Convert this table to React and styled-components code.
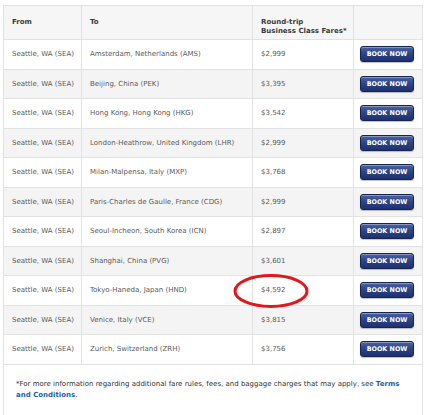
import React from "react";
import styled, { createGlobalStyle } from "styled-components";

const fares = [
  { to: "Amsterdam, Netherlands (AMS)", price: "$2,999" },
  { to: "Beijing, China (PEK)", price: "$3,395" },
  { to: "Hong Kong, Hong Kong (HKG)", price: "$3,542" },
  { to: "London-Heathrow, United Kingdom (LHR)", price: "$2,999" },
  { to: "Milan-Malpensa, Italy (MXP)", price: "$3,768" },
  { to: "Paris-Charles de Gaulle, France (CDG)", price: "$2,999" },
  { to: "Seoul-Incheon, South Korea (ICN)", price: "$2,897" },
  { to: "Shanghai, China (PVG)", price: "$3,601" },
  { to: "Tokyo-Haneda, Japan (HND)", price: "$4,592" },
  { to: "Venice, Italy (VCE)", price: "$3,815" },
  { to: "Zurich, Switzerland (ZRH)", price: "$3,756" },
];

const GlobalStyle = createGlobalStyle`
  body {
    margin: 0;
    background: #fff;
    font-family: "DejaVu Sans", Verdana, sans-serif;
  }
`;

const Wrapper = styled.div`
  position: relative;
  padding: 5px 8px 0 3px;
`;

const Table = styled.table`
  width: 419px;
  border-collapse: collapse;
  table-layout: fixed;
  border: 1px solid #e2e2e2;
  font-size: 7px;
  color: #5a5a5a;
`;

const Head = styled.th`
  background: #f6f6f6;
  border: 1px solid #e2e2e2;
  text-align: left;
  vertical-align: top;
  font-weight: bold;
  color: #3a3a3a;
  line-height: 9px;
  white-space: nowrap;
  padding: 12px 7px 0 8px;
  height: 21px;
`;

const Row = styled.tr`
  background: ${(p) => (p.$odd ? "#f4f4f4" : "#fff")};
`;

const Cell = styled.td`
  border: 1px solid #e2e2e2;
  padding: 0 8px;
  height: 28.5px;
  white-space: nowrap;
  vertical-align: middle;
`;

const ButtonCell = styled(Cell)`
  padding: 0 0 0 6px;
`;

const BookButton = styled.button`
  display: block;
  width: 54px;
  height: 16px;
  padding: 0;
  border: 1px solid #16244e;
  border-radius: 3px;
  background: linear-gradient(#4a63a3, #2c4384 50%, #1d3170);
  box-shadow: inset 0 1px 0 rgba(255, 255, 255, 0.35), 0 1px 1px rgba(0, 0, 0, 0.25);
  color: #fff;
  font-family: "DejaVu Sans", Verdana, sans-serif;
  font-size: 6.4px;
  font-weight: bold;
  cursor: pointer;
`;

const Note = styled.td`
  border: 1px solid #e2e2e2;
  padding: 14px 10px 14px 12px;
  color: #333;
  line-height: 11px;
`;

const Link = styled.a`
  color: #1d5fa8;
  font-weight: bold;
  text-decoration: none;
`;

const Circle = styled.svg`
  position: absolute;
  left: 232px;
  top: 273px;
  pointer-events: none;
`;

export default function App() {
  return (
    <>
      <GlobalStyle />
      <Wrapper>
        <Table>
          <colgroup>
            <col style={{ width: 78 }} />
            <col style={{ width: 171 }} />
            <col style={{ width: 101 }} />
            <col style={{ width: 69 }} />
          </colgroup>
          <thead>
            <tr>
              <Head>From</Head>
              <Head>To</Head>
              <Head>
                Round-trip
                <br />
                Business Class Fares*
              </Head>
              <Head />
            </tr>
          </thead>
          <tbody>
            {fares.map((f, i) => (
              <Row key={f.to} $odd={i % 2 === 1}>
                <Cell>Seattle, WA (SEA)</Cell>
                <Cell>{f.to}</Cell>
                <Cell>{f.price}</Cell>
                <ButtonCell>
                  <BookButton>BOOK NOW</BookButton>
                </ButtonCell>
              </Row>
            ))}
            <tr>
              <Note colSpan={4}>
                *For more information regarding additional fare rules, fees, and baggage charges that may apply, see{" "}
                <Link href="#">Terms and Conditions</Link>.
              </Note>
            </tr>
          </tbody>
        </Table>
        <Circle width="78" height="36" viewBox="0 0 78 36">
          <ellipse cx="39" cy="18" rx="36" ry="15.5" fill="none" stroke="#e3161b" strokeWidth="3" />
        </Circle>
      </Wrapper>
    </>
  );
}
